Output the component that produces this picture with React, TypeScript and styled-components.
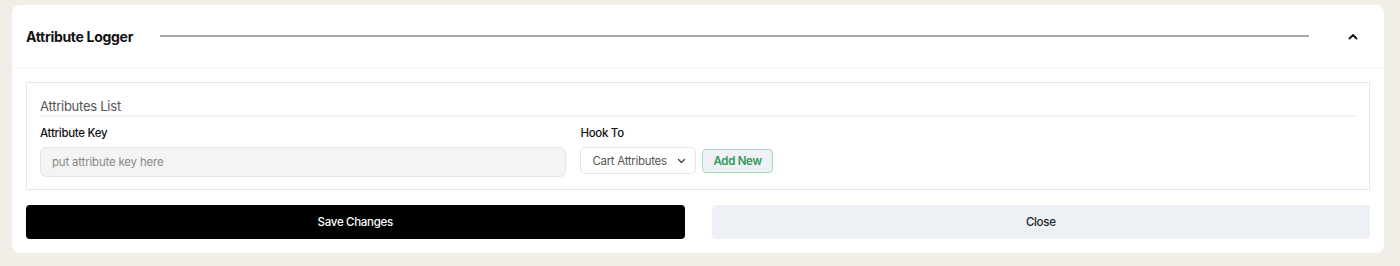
import React, {useState} from "react";
import styled, {createGlobalStyle} from "styled-components";

const GlobalStyle = createGlobalStyle`
    body {
        margin: 0;
        background: #f1eee8;
        font-family: Inter, "Noto Sans", "Liberation Sans", sans-serif;
    }
`;

const Page = styled.div`
    padding: 5px 16px 14px 12px;
`;

const Card = styled.div`
    background: #ffffff;
    border-radius: 8px;
`;

const Header = styled.div`
    height: 63px;
    display: flex;
    align-items: center;
    padding: 0 24px 0 14px;
    gap: 27px;
    box-sizing: border-box;
    border-bottom: 1px solid #f6f5f2;
`;

const Title = styled.div`
    font-size: 14px;
    font-weight: 700;
    letter-spacing: -0.3px;
    color: #111;
    margin-top: 1px;
`;

const Rule = styled.div`
    flex: 1;
    height: 2px;
    background: #a8a8a8;
    margin-right: 10px;
    margin-top: -1px;
`;

const ToggleBtn = styled.button`
    border: 0;
    background: none;
    padding: 0;
    width: 14px;
    height: 14px;
    display: flex;
    align-items: center;
    justify-content: center;
    cursor: pointer;
    color: #111;
`;

const Body = styled.div`
    padding: 14px 14px 14px;
`;

const Section = styled.div`
    border: 1px solid #e6e6e6;
    padding: 16px 13px 12px;
`;

const SectionTitle = styled.div`
    font-size: 13px;
    line-height: 15px;
    letter-spacing: -0.25px;
    color: #555;
    padding-bottom: 1px;
    border-bottom: 2px solid #f0f2f5;
`;

const Fields = styled.div`
    display: flex;
    gap: 14px;
    margin-top: 9px;
`;

const Field = styled.div<{ $basis?: string }>`
    display: flex;
    flex-direction: column;
    gap: 6px;
    ${p => p.$basis ? `flex: 0 0 ${p.$basis};` : `flex: 1;`}
`;

const Label = styled.label`
    font-size: 11.5px;
    line-height: 15px;
    font-weight: 500;
    letter-spacing: -0.3px;
    color: #111;
`;

const Input = styled.input`
    height: 30px;
    box-sizing: border-box;
    border: 1px solid #e6e6e6;
    background: #f4f4f4;
    border-radius: 6px;
    padding: 0 11px;
    font-family: inherit;
    font-size: 11.5px;
    letter-spacing: -0.2px;
    color: #222;
    &::placeholder {
        color: #8a8a8a;
    }
    &:focus {
        outline: none;
    }
`;

const Row = styled.div`
    display: flex;
    align-items: center;
    gap: 6px;
`;

const SelectWrap = styled.div`
    position: relative;
    width: 116px;
`;

const Select = styled.select`
    appearance: none;
    width: 100%;
    height: 27px;
    border: 1px solid #e6e6e6;
    border-radius: 5px;
    background: #fff;
    padding: 0 0 0 11px;
    font-family: inherit;
    font-size: 11.5px;
    letter-spacing: -0.3px;
    color: #555;
`;

const Caret = styled.span`
    position: absolute;
    right: 10px;
    top: 50%;
    transform: translateY(-50%);
    display: flex;
    pointer-events: none;
    color: #444;
`;

const AddBtn = styled.button`
    height: 24px;
    padding: 0 10px;
    border: 1px solid #a9dbb7;
    border-radius: 4px;
    background: #eef2f6;
    color: #34995a;
    font-family: inherit;
    font-size: 11.5px;
    font-weight: 600;
    letter-spacing: -0.3px;
    cursor: pointer;
`;

const Actions = styled.div`
    display: grid;
    grid-template-columns: 1fr 1fr;
    gap: 27px;
    margin-top: 15px;
`;

const ActionBtn = styled.button<{ $primary?: boolean }>`
    height: 34px;
    border-radius: 4px;
    border: 0;
    font-family: inherit;
    font-size: 11.5px;
    font-weight: 500;
    letter-spacing: -0.3px;
    cursor: pointer;
    background: ${p => p.$primary ? "#000" : "#edf1f5"};
    color: ${p => p.$primary ? "#fff" : "#222"};
`;

const App = () => {
    const [open, setOpen] = useState(true);
    const [attrKey, setAttrKey] = useState("");
    const [hook, setHook] = useState("cart");

    return (
        <Page>
            <GlobalStyle/>
            <Card>
                <Header>
                    <Title>Attribute Logger</Title>
                    <Rule/>
                    <ToggleBtn onClick={() => setOpen(!open)}>
                        <svg width="10" height="7" viewBox="0 0 10 7" fill="none">
                            <path d={open ? "M1.5 5.5L5 2L8.5 5.5" : "M1.5 1.5L5 5L8.5 1.5"}
                                  stroke="currentColor" strokeWidth="1.8" strokeLinecap="round" strokeLinejoin="round"/>
                        </svg>
                    </ToggleBtn>
                </Header>
                {open && (
                    <Body>
                        <Section>
                            <SectionTitle>Attributes List</SectionTitle>
                            <Fields>
                                <Field $basis="40%">
                                    <Label>Attribute Key</Label>
                                    <Input placeholder="put attribute key here"
                                           value={attrKey}
                                           onChange={(e: React.ChangeEvent<HTMLInputElement>) => {
                                               setAttrKey(e.currentTarget.value);
                                           }}/>
                                </Field>
                                <Field>
                                    <Label>Hook To</Label>
                                    <Row>
                                        <SelectWrap>
                                            <Select value={hook}
                                                    onChange={(e: React.ChangeEvent<HTMLSelectElement>) => {
                                                        setHook(e.currentTarget.value);
                                                    }}>
                                                <option value="cart">Cart Attributes</option>
                                                <option value="note">Cart Note</option>
                                            </Select>
                                            <Caret>
                                                <svg width="9" height="6" viewBox="0 0 9 6" fill="none">
                                                    <path d="M1.5 1.5L4.5 4.5L7.5 1.5" stroke="currentColor"
                                                          strokeWidth="1.3" strokeLinecap="round" strokeLinejoin="round"/>
                                                </svg>
                                            </Caret>
                                        </SelectWrap>
                                        <AddBtn>Add New</AddBtn>
                                    </Row>
                                </Field>
                            </Fields>
                        </Section>
                        <Actions>
                            <ActionBtn $primary>Save Changes</ActionBtn>
                            <ActionBtn>Close</ActionBtn>
                        </Actions>
                    </Body>
                )}
            </Card>
        </Page>
    );
};

export default App;
